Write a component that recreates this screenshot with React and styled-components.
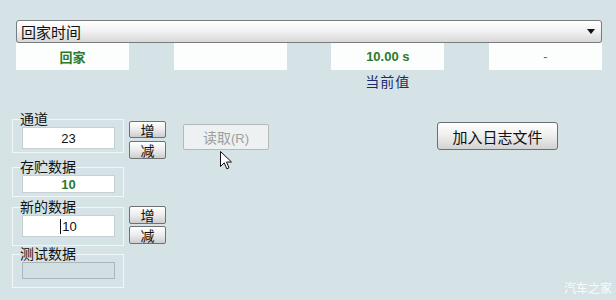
import React from "react";
import styled, { createGlobalStyle } from "styled-components";

const GlobalStyle = createGlobalStyle`
    html, body {
        margin: 0;
        padding: 0;
    }
    body {
        background: #d6e3e6;
        font-family: "Liberation Sans", "Noto Sans CJK SC", sans-serif;
    }
`;

const Page = styled.div`
    position: relative;
    width: 616px;
    height: 300px;
    box-sizing: border-box;
    padding: 20px 14px 0 16px;
    background: #d6e3e6;
    overflow: hidden;
`;

const Combo = styled.div`
    box-sizing: border-box;
    width: 586px;
    height: 23px;
    display: flex;
    align-items: center;
    justify-content: space-between;
    padding: 0 6px 0 4px;
    border: 1px solid #7a7d80;
    border-radius: 3px;
    background: linear-gradient(#ffffff, #f3f3f3 45%, #d8d8d8);
    font-size: 15px;
    color: #111;
`;

const ValueRow = styled.div`
    display: grid;
    grid-template-columns: repeat(4, 113px);
    justify-content: space-between;
    width: 586px;
`;

const ValueCell = styled.div`
    display: flex;
    flex-direction: column;
    align-items: center;
`;

const ValueBox = styled.div`
    box-sizing: border-box;
    width: 113px;
    height: 27px;
    display: flex;
    align-items: center;
    justify-content: center;
    background: #fcfefe;
    font-size: 13px;
    font-weight: ${({ $bold }) => ($bold ? 700 : 400)};
    color: ${({ $color }) => $color || "#111"};
`;

const Caption = styled.div`
    margin-top: 4px;
    font-size: 14px;
    line-height: 16px;
    color: #1c2b6e;
    letter-spacing: 1px;
`;

const Lower = styled.div`
    display: flex;
    flex-direction: column;
    margin: 21px 0 0 -4px;
`;

const Row = styled.div`
    display: flex;
    align-items: flex-start;
`;

const Group = styled.fieldset`
    box-sizing: border-box;
    width: 112px;
    min-width: 0;
    margin: ${({ $mt }) => $mt || 0}px 0 0 0;
    padding: 0 8px ${({ $pb }) => $pb}px 9px;
    border: 1px solid #f1f6f7;
`;

const Legend = styled.legend`
    padding: 0;
    margin-left: -2px;
    font-size: 14px;
    line-height: 16px;
    color: #111;
`;

const Field = styled.div`
    box-sizing: border-box;
    width: 93px;
    height: ${({ $h }) => $h}px;
    display: flex;
    align-items: center;
    justify-content: center;
    border: 1px solid ${({ $disabled }) => ($disabled ? "#a9b6ba" : "#c4d0d3")};
    background: ${({ $disabled }) => ($disabled ? "#d3e0e3" : "#ffffff")};
    font-size: 13px;
    font-weight: ${({ $bold }) => ($bold ? 700 : 400)};
    color: ${({ $color }) => $color || "#111"};
`;

const Caret = styled.span`
    display: inline-block;
    width: 1px;
    height: 15px;
    margin-right: 1px;
    background: #111;
`;

const Stepper = styled.div`
    display: flex;
    flex-direction: column;
    gap: ${({ $gap }) => $gap}px;
    margin: ${({ $mt }) => $mt}px 0 0 5px;
`;

const StepButton = styled.button`
    box-sizing: border-box;
    width: 37px;
    height: ${({ $h }) => $h}px;
    padding: 0;
    border: 1px solid #6f7173;
    border-radius: 2px;
    background: linear-gradient(#ffffff, #ececec 50%, #cdcdcd);
    font-family: "Noto Sans CJK SC", sans-serif;
    font-size: 14px;
    line-height: 14px;
    color: #111;
`;

const ReadWrap = styled.div`
    position: relative;
    margin: 13px 0 0 17px;
`;

const ReadButton = styled.button`
    box-sizing: border-box;
    width: 86px;
    height: 26px;
    padding: 0;
    border: 1px solid #b3b8b9;
    border-radius: 2px;
    background: #edf1f1;
    font-family: "Noto Sans CJK SC", sans-serif;
    font-size: 14px;
    color: #9d9fa0;

    small {
        font-family: "Liberation Sans", sans-serif;
        font-size: 13px;
    }
`;

const Pointer = styled.svg`
    position: absolute;
    left: 37px;
    top: 27px;
`;

const LogButton = styled.button`
    box-sizing: border-box;
    width: 121px;
    height: 28px;
    margin: 11px 0 0 168px;
    padding: 0;
    border: 1px solid #6d7072;
    border-radius: 3px;
    background: linear-gradient(#ffffff, #f0f0f0 45%, #d2d2d2);
    font-family: "Noto Sans CJK SC", sans-serif;
    font-size: 15px;
    color: #111;
`;

const Watermark = styled.div`
    position: absolute;
    right: 4px;
    bottom: 4px;
    font-family: "Noto Sans CJK SC", sans-serif;
    font-size: 12px;
    color: rgba(255, 255, 255, 0.9);
`;

const green = "#2b7a2b";

function DropArrow() {
    return (
        <svg width="8" height="5" viewBox="0 0 8 5">
            <path d="M0 0 H8 L4 5 Z" fill="#111" />
        </svg>
    );
}

export default function App() {
    return (
        <>
            <GlobalStyle />
            <Page>
                <Combo>
                    <span>回家时间</span>
                    <DropArrow />
                </Combo>
                <ValueRow>
                    <ValueCell>
                        <ValueBox $bold $color={green}>回家</ValueBox>
                    </ValueCell>
                    <ValueCell>
                        <ValueBox />
                    </ValueCell>
                    <ValueCell>
                        <ValueBox $bold $color={green}>10.00 s</ValueBox>
                        <Caption>当前值</Caption>
                    </ValueCell>
                    <ValueCell>
                        <ValueBox $color="#666">-</ValueBox>
                    </ValueCell>
                </ValueRow>

                <Lower>
                    <Row>
                        <Group $pb={3}>
                            <Legend>通道</Legend>
                            <Field $h={22}>23</Field>
                        </Group>
                        <Stepper $mt={10} $gap={3}>
                            <StepButton $h={17}>增</StepButton>
                            <StepButton $h={18}>减</StepButton>
                        </Stepper>
                        <ReadWrap>
                            <ReadButton disabled>
                                读取<small>(R)</small>
                            </ReadButton>
                            <Pointer width="12" height="19" viewBox="0 0 12 19">
                                <path
                                    d="M0.5 0.5 V15.5 L4.2 11.8 L6.8 17.8 L9 16.8 L6.5 11 H11.5 Z"
                                    fill="#fff"
                                    stroke="#111"
                                    strokeWidth="1"
                                    strokeLinejoin="round"
                                />
                            </Pointer>
                        </ReadWrap>
                        <LogButton>加入日志文件</LogButton>
                    </Row>
                    <Row>
                        <Group $pb={3}>
                            <Legend>存贮数据</Legend>
                            <Field $h={18} $bold $color={green}>10</Field>
                        </Group>
                    </Row>
                    <Row>
                        <Group $mt={2} $pb={8}>
                            <Legend>新的数据</Legend>
                            <Field $h={22}>
                                <Caret />
                                10
                            </Field>
                        </Group>
                        <Stepper $mt={9} $gap={2}>
                            <StepButton $h={18}>增</StepButton>
                            <StepButton $h={18}>减</StepButton>
                        </Stepper>
                    </Row>
                    <Row>
                        <Group $pb={8}>
                            <Legend>测试数据</Legend>
                            <Field $h={17} $disabled />
                        </Group>
                    </Row>
                </Lower>

                <Watermark>汽车之家</Watermark>
            </Page>
        </>
    );
}
